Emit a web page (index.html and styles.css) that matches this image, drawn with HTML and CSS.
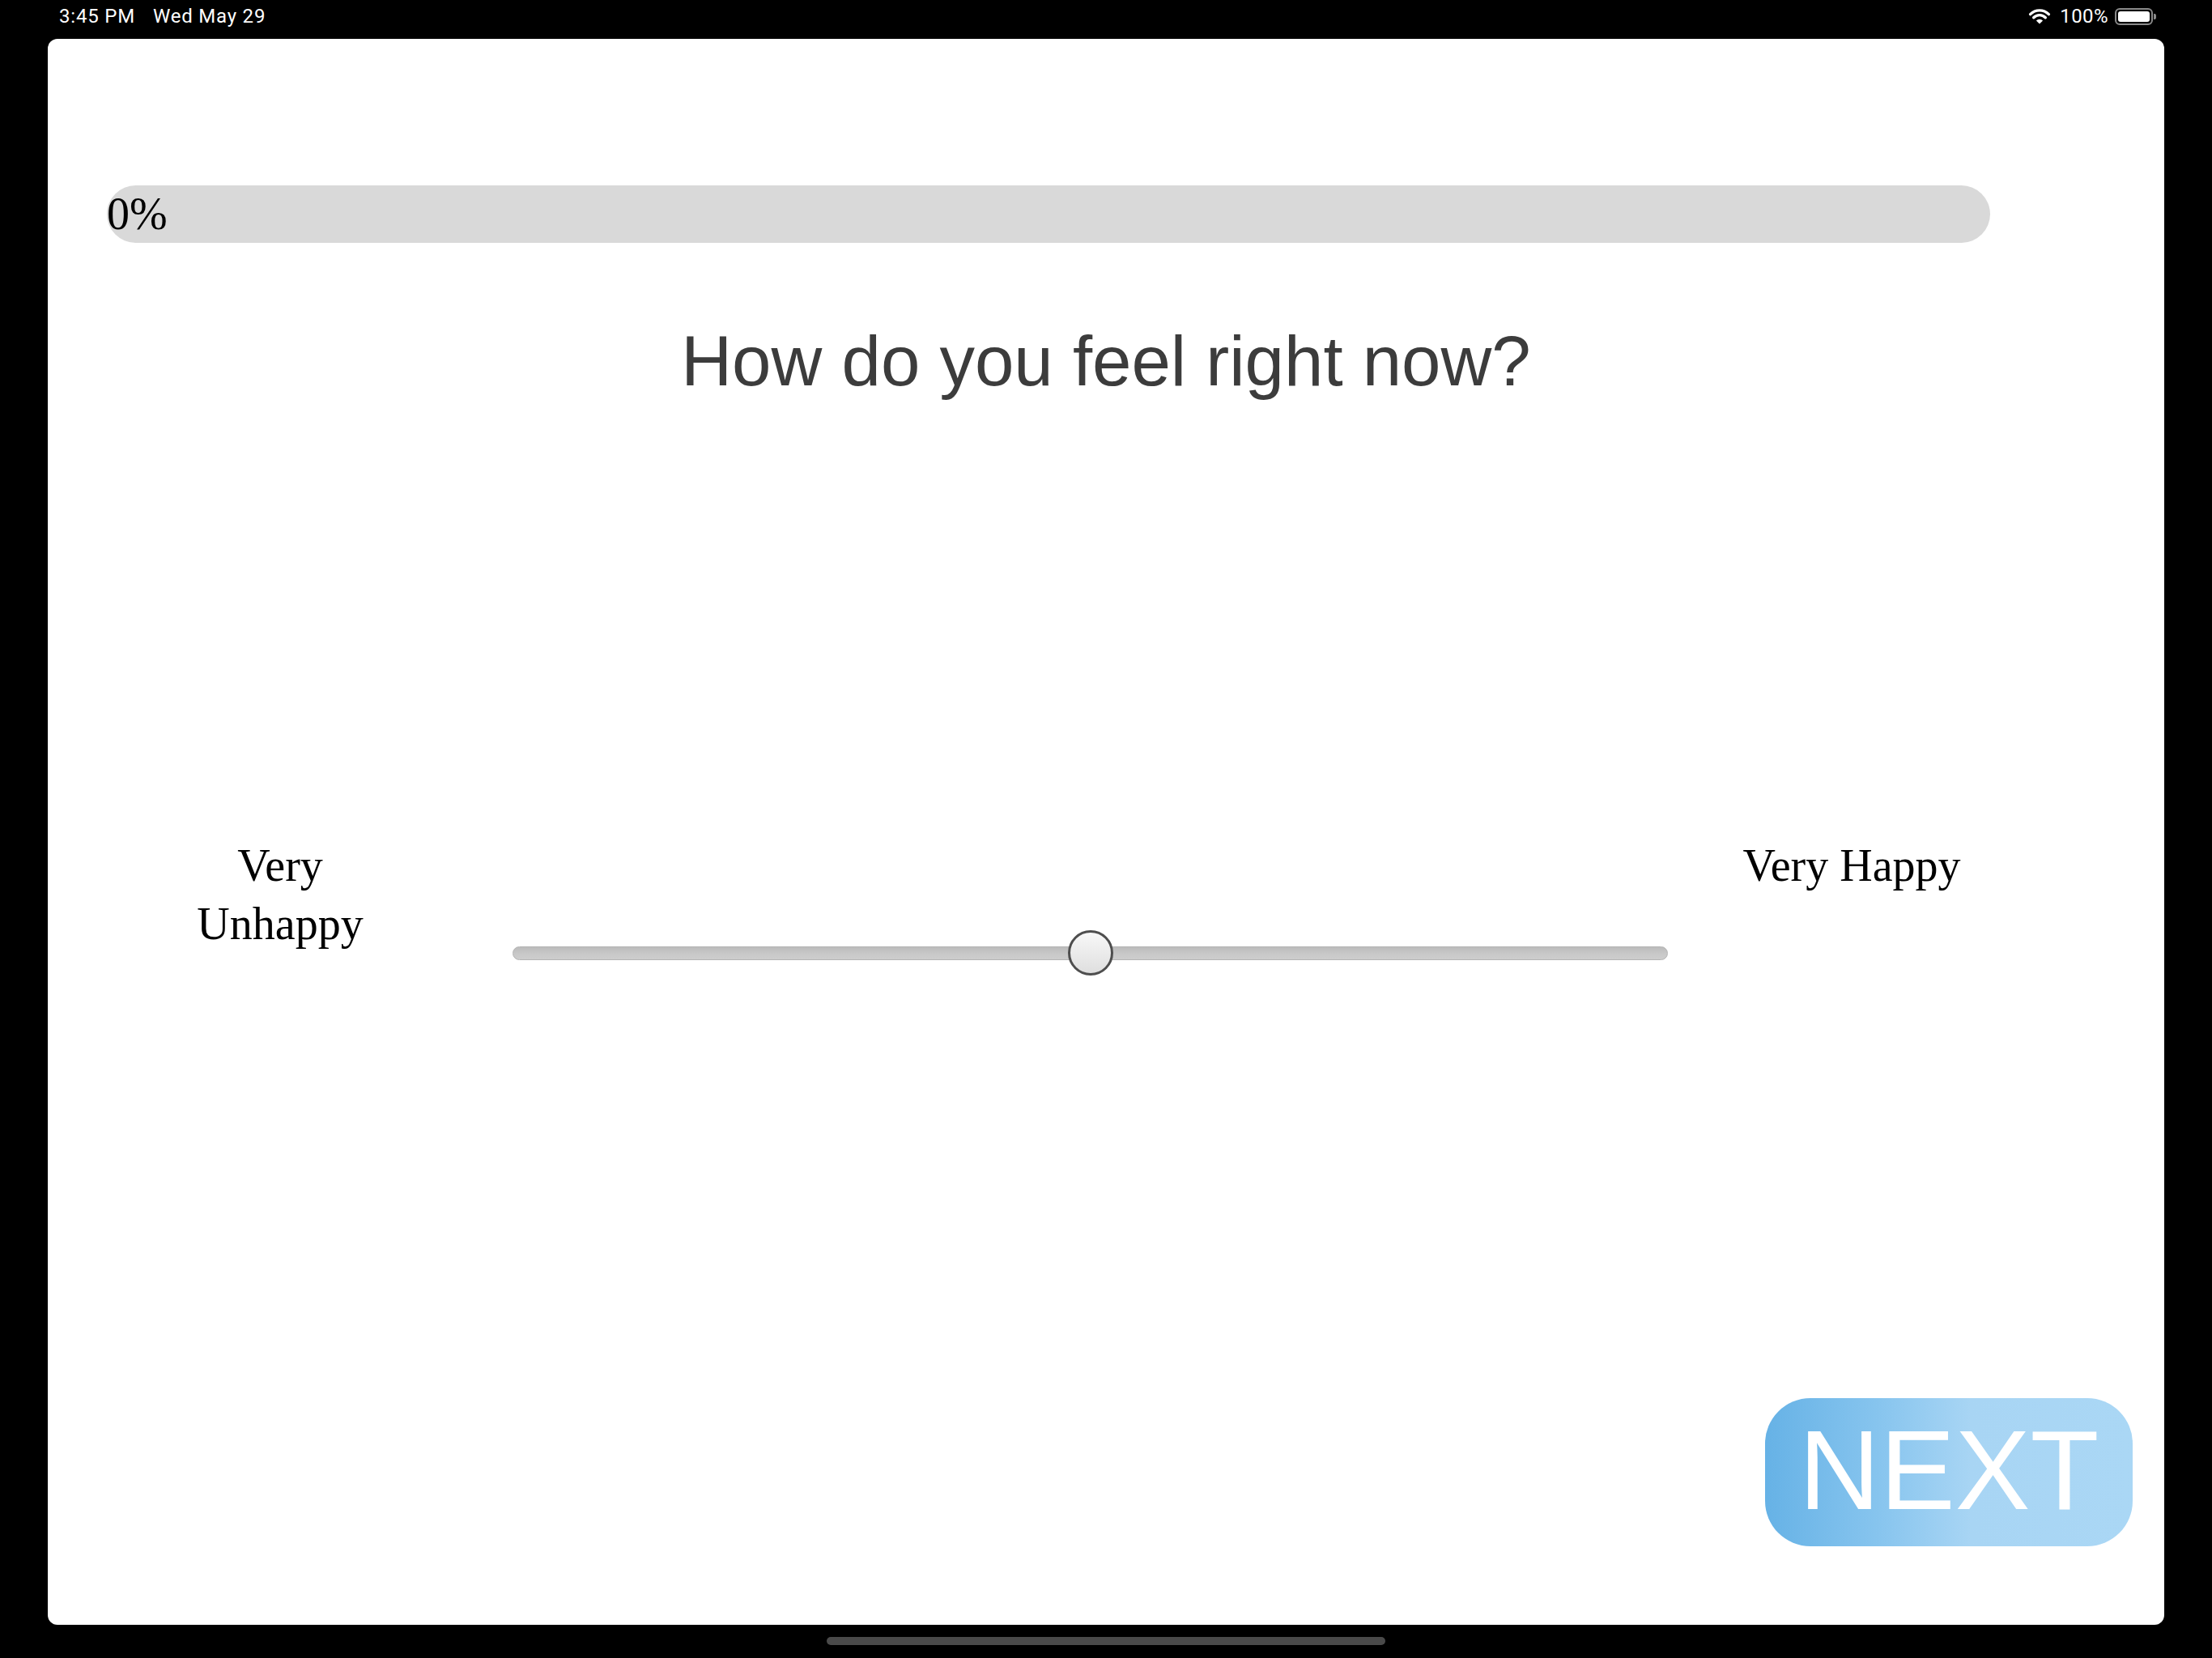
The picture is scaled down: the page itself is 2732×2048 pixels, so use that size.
FILE: index.html
```html
<!DOCTYPE html>
<html lang="en">
<head>
<meta charset="utf-8">
<title>Mood check-in</title>
<link rel="stylesheet" href="styles.css">
</head>
<body>
<div class="screen">
  <header class="status-bar">
    <div class="status-left">
      <span class="time">3:45 PM</span>
      <span class="date">Wed May 29</span>
    </div>
    <div class="status-right">
      <svg class="wifi" width="28" height="20" viewBox="0 0 28 20" aria-hidden="true">
        <path d="M2.6 7.6 A16 16 0 0 1 25.4 7.6" fill="none" stroke="#fff" stroke-width="3.4" stroke-linecap="round"/>
        <path d="M6.7 11.7 A10.3 10.3 0 0 1 21.3 11.7" fill="none" stroke="#fff" stroke-width="3.4" stroke-linecap="round"/>
        <path d="M14 19.5 L9.9 15.4 A5.8 5.8 0 0 1 18.1 15.4 Z" fill="#fff"/>
      </svg>
      <span class="battery-pct">100%</span>
      <span class="battery"><span class="battery-level"></span></span>
      <span class="battery-cap"></span>
    </div>
  </header>

  <main class="card">
    <div class="progress">
      <div class="progress-fill" style="width: 0%"></div>
      <span class="progress-label">0%</span>
    </div>

    <h1 class="question">How do you feel right now?</h1>

    <div class="scale-row">
      <div class="scale-label scale-label-low">Very<br>Unhappy</div>
      <div class="slider">
        <div class="slider-track"></div>
        <div class="slider-thumb" style="left: 50%"></div>
      </div>
      <div class="scale-label scale-label-high">Very Happy</div>
    </div>

    <button class="next-btn" type="button">NEXT</button>
  </main>

  <div class="home-bar"><span class="home-indicator"></span></div>
</div>
</body>
</html>
```

FILE: styles.css
```css
html, body {
  margin: 0;
  padding: 0;
  background: #000;
}

.screen {
  width: 2732px;
  height: 2048px;
  display: flex;
  flex-direction: column;
  background: #000;
  overflow: hidden;
}

/* ---- status bar ---- */
.status-bar {
  height: 48px;
  display: flex;
  justify-content: space-between;
  align-items: flex-start;
  padding: 0 69px 0 73px;
  box-sizing: border-box;
  color: #fff;
  font-family: Roboto, "Liberation Sans", sans-serif;
  font-size: 24px;
  letter-spacing: 0.8px;
  line-height: 40px;
}

.status-left {
  display: flex;
}

.date {
  margin-left: 22px;
}

.status-right {
  display: flex;
  align-items: center;
  height: 40px;
}

.wifi {
  display: block;
  margin-top: -1px;
}

.battery-pct {
  margin-left: 11px;
  letter-spacing: 0.4px;
}

.battery {
  margin-left: 8px;
  width: 47px;
  height: 21px;
  box-sizing: border-box;
  border: 2px solid #8a8a8a;
  border-radius: 6px;
  padding: 2px;
  display: flex;
}

.battery-level {
  flex: 1;
  background: #fff;
  border-radius: 3px;
}

.battery-cap {
  width: 3px;
  height: 7px;
  margin-left: 1px;
  background: #8a8a8a;
  border-radius: 0 2px 2px 0;
}

/* ---- main card ---- */
.card {
  margin: 0 59px;
  height: 1959px;
  box-sizing: border-box;
  padding: 181px 0 97px;
  background: #fff;
  border-radius: 12px;
  display: flex;
  flex-direction: column;
}

.progress {
  position: relative;
  margin-left: 73px;
  width: 2326px;
  height: 71px;
  border-radius: 36px;
  background: #d9d9d9;
  display: flex;
  align-items: flex-start;
}

.progress-fill {
  position: absolute;
  left: 0;
  top: 0;
  bottom: 0;
  border-radius: 36px;
  background: #6ab4e8;
}

.progress-label {
  position: relative;
  font-family: "Liberation Serif", "Times New Roman", serif;
  font-size: 56px;
  line-height: 71px;
  color: #000;
}

.question {
  margin: 96px 0 0;
  text-align: center;
  font-family: "Liberation Sans", Arial, sans-serif;
  font-weight: 400;
  font-size: 87px;
  line-height: 100px;
  color: #3c3c3c;
}

/* ---- rating scale ---- */
.scale-row {
  margin: 537px 0 0 73px;
  display: flex;
  align-items: flex-start;
}

.scale-label {
  font-family: "Liberation Serif", "Times New Roman", serif;
  font-size: 56px;
  line-height: 72px;
  color: #000;
  text-align: center;
}

.scale-label-low {
  width: 428px;
}

.scale-label-high {
  width: 342px;
}

.slider {
  position: relative;
  width: 1427px;
  height: 56px;
  margin: 116px 56px 0 73px;
}

.slider-track {
  margin-top: 20px;
  height: 17px;
  box-sizing: border-box;
  border: 1px solid #b4b4b4;
  border-radius: 9px;
  background: linear-gradient(#bcbcbc, #c9c9c9 60%, #cdcdcd);
}

.slider-thumb {
  position: absolute;
  top: 0;
  width: 56px;
  height: 56px;
  box-sizing: border-box;
  transform: translateX(-50%);
  border: 3px solid #4e4e4e;
  border-radius: 50%;
  background: linear-gradient(#f8f8f8, #dfdfdf);
}

/* ---- next button ---- */
.next-btn {
  margin: auto 39px 0 0;
  align-self: flex-end;
  width: 454px;
  height: 183px;
  box-sizing: border-box;
  padding: 0 0 6px;
  border: none;
  border-radius: 56px;
  background: linear-gradient(to right, #66b2e6 0%, #86c4ee 30%, #a8d5f4 56%, #aad7f5 100%);
  color: #fff;
  font-family: "Liberation Sans", Arial, sans-serif;
  font-size: 139px;
  line-height: 177px;
  text-align: center;
}

/* ---- home indicator ---- */
.home-bar {
  flex: 1;
  display: flex;
  justify-content: center;
  align-items: flex-start;
  padding-top: 15px;
}

.home-indicator {
  width: 690px;
  height: 10px;
  border-radius: 5px;
  background: #4a4a4a;
}
```
